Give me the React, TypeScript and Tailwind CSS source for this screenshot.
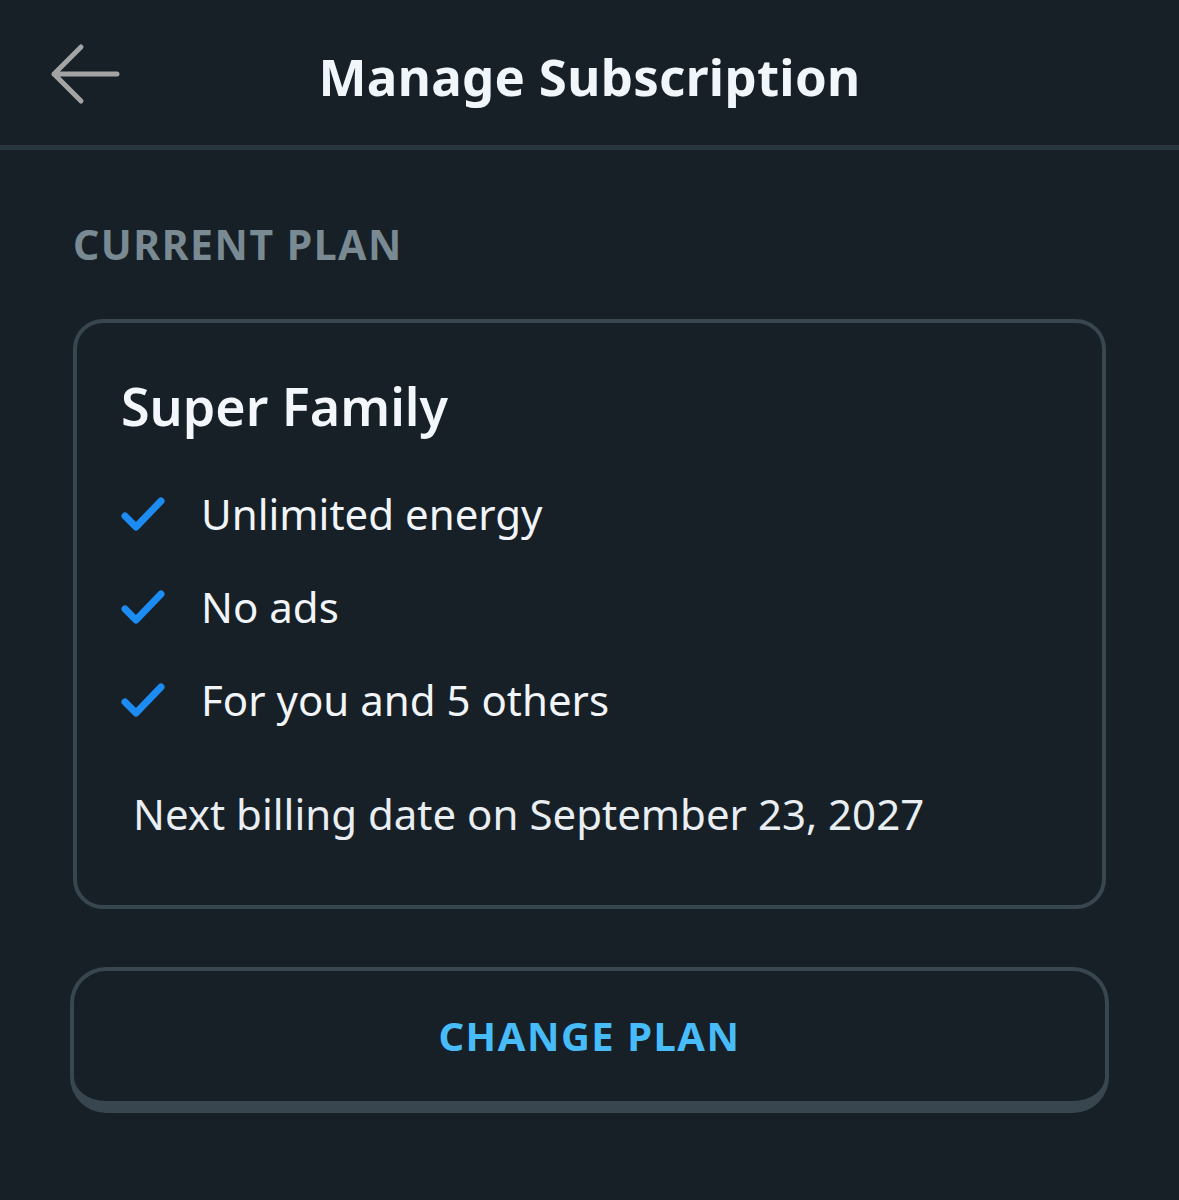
import React from "react";

function Check() {
  return (
    <svg width="44" height="38" viewBox="0 0 44 38" fill="none">
      <path d="M4 21 L15 32 L40 6" stroke="#1c8cf2" strokeWidth="7" strokeLinecap="round" strokeLinejoin="round" />
    </svg>
  );
}

export default function App() {
  const features = ["Unlimited energy", "No ads", "For you and 5 others"];
  return (
    <div className="w-[1179px] h-[1200px] bg-[#172027] flex flex-col" style={{ fontFamily: '"Noto Sans", sans-serif' }}>
      <header className="h-[145px] flex items-center relative">
        <div className="absolute left-[50px] top-[43px]">
          <svg width="72" height="62" viewBox="0 0 72 62" fill="none">
            <path d="M4 31 H67 M31 4 L4 31 L31 58" stroke="#a3a3a3" strokeWidth="5" strokeLinecap="round" strokeLinejoin="round" />
          </svg>
        </div>
        <h1 className="w-full text-center text-[51px] font-bold text-[#f1f6fb] tracking-[0.3px] pt-[8px]">Manage Subscription</h1>
      </header>
      <div className="h-[5px] bg-[#2a363d]" />
      <div className="px-[73px] pt-[74px]">
        <div className="text-[41px] font-bold text-[#7a8a93] tracking-[1.5px] leading-none">CURRENT PLAN</div>
        <div className="mt-[54px] border-[4px] border-[#37464f] rounded-[30px] w-[1033px] h-[590px] pl-[44px] pt-[57px]">
          <div className="text-[52px] font-semibold text-[#f3f7fb] leading-none">Super Family</div>
          <div className="mt-[54px] flex flex-col gap-[38px]">
            {features.map((f) => (
              <div key={f} className="flex items-center gap-[36px] h-[55px]">
                <Check />
                <span className="text-[42px] text-[#f1f5f9] leading-none">{f}</span>
              </div>
            ))}
          </div>
          <div className="mt-[66px] pl-[12px] text-[42px] text-[#e9eef2] leading-none">Next billing date on September 23, 2027</div>
        </div>
        <button className="mt-[58px] ml-[-3px] w-[1039px] h-[146px] border-[4px] border-b-[12px] border-[#37464f] rounded-[36px] flex items-center justify-center">
          <span className="text-[40px] font-bold text-[#47bcf8] tracking-[1.5px]">CHANGE PLAN</span>
        </button>
      </div>
    </div>
  );
}
